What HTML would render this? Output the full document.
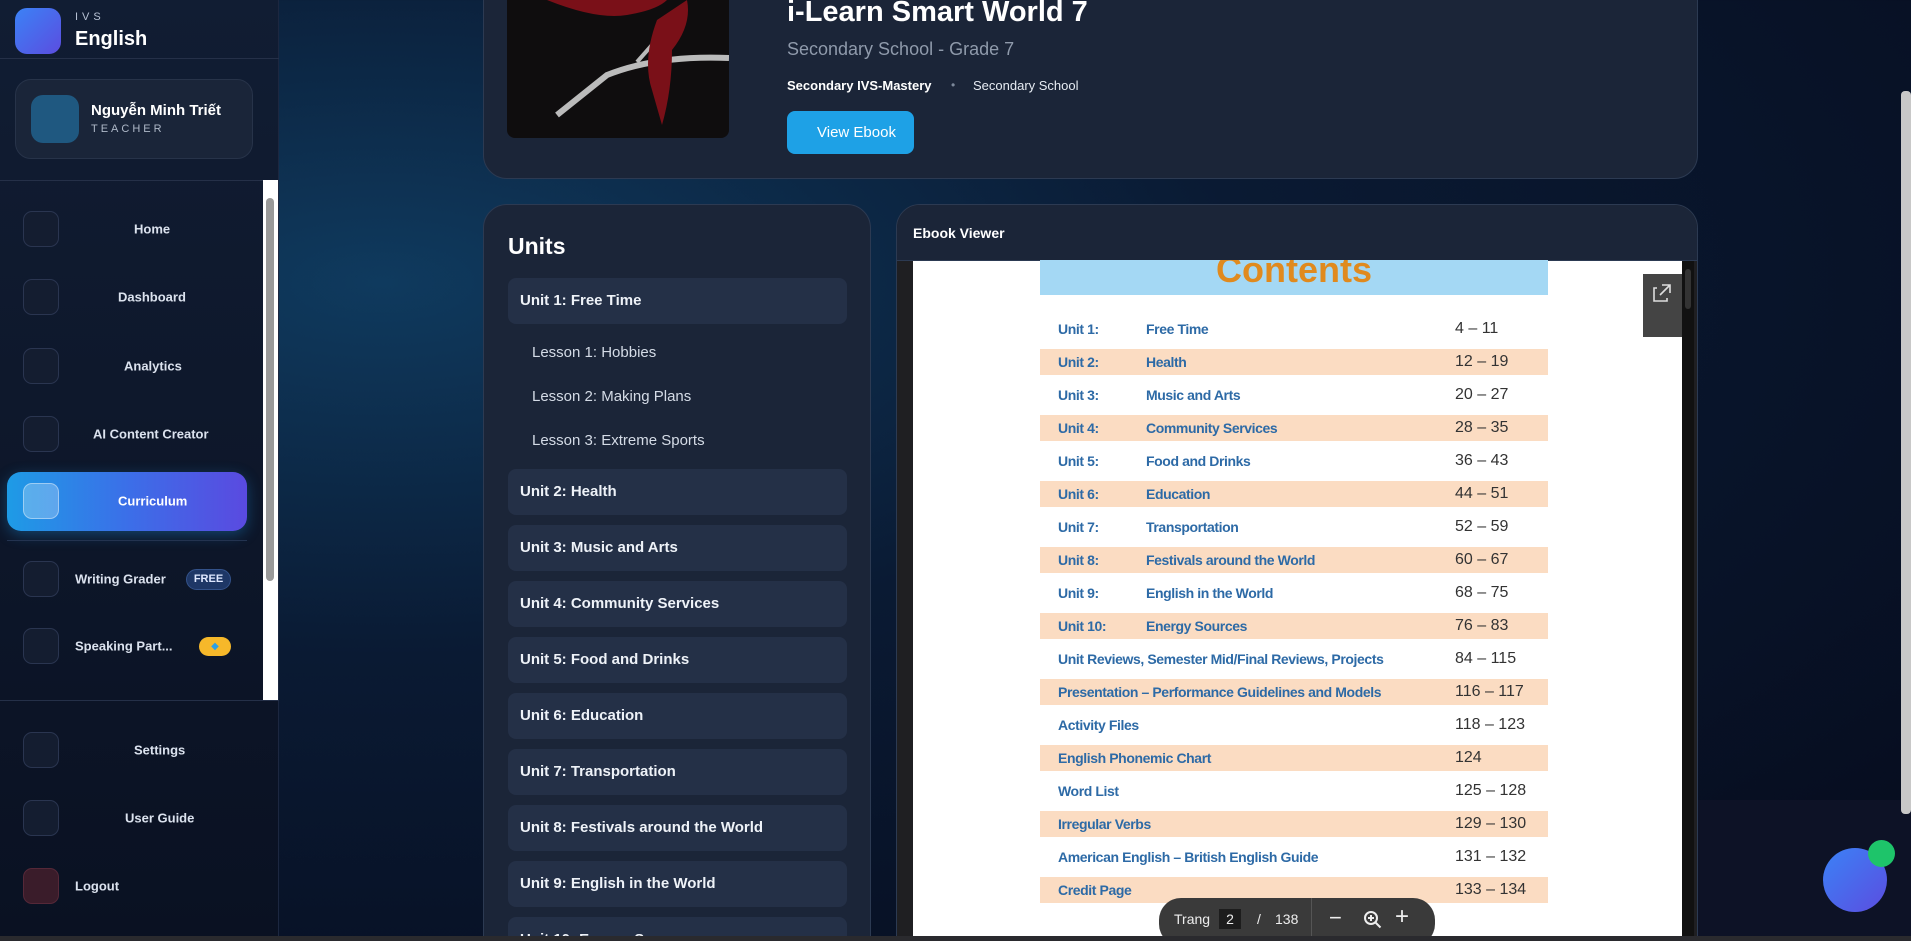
<!DOCTYPE html>
<html style="width:1911px;height:941px;overflow:hidden"><head><meta charset="utf-8"><style>
*{box-sizing:border-box;margin:0;padding:0}
body{width:1911px;height:941px;overflow:hidden;font-family:"Liberation Sans",sans-serif;background:radial-gradient(ellipse at 20% 30%,#0f3a5e 0%,#0a1a33 40%,#060b1c 100%);position:relative;color:#fff}
.abs{position:absolute}
.side{left:0;top:0;width:279px;height:941px;background:linear-gradient(#111d33,#0a1122);border-right:1px solid #1c2740}
.ico{position:absolute;left:23px;width:36px;height:36px;border-radius:9px;border:1px solid #2a3550;background:#141d30}
.nav{position:absolute;font-size:13px;font-weight:bold;color:#dbe2ee;transform:translateY(-50%)}
.card{background:#1b2538;border:1px solid #2c3a52;border-radius:24px}
.unit{position:absolute;left:24px;width:339px;height:46px;background:#243047;border-radius:8px;font-size:15px;font-weight:bold;color:#eef2f8;padding-left:12px;line-height:46px}
.les{position:absolute;left:48px;font-size:15px;color:#d4dbe6}
.row{position:absolute;left:1040px;width:508px;height:26px;font-size:14px;letter-spacing:-0.4px;color:#2d6aa6;font-weight:bold}
.row.p{background:#fbdcc2}
.row span{position:absolute;top:5px}
.row .pg{left:415px;color:#333;font-weight:normal;font-size:16px;letter-spacing:0;top:4px}
</style></head><body>
<div class="abs side">
 <div class="abs" style="left:15px;top:8px;width:46px;height:46px;border-radius:12px;background:linear-gradient(135deg,#3b82f6,#5b4de0)"></div>
 <div class="abs" style="left:75px;top:11px;font-size:11px;letter-spacing:4px;color:#b8c2d4">IVS</div>
 <div class="abs" style="left:75px;top:28px;font-size:20px;font-weight:bold">English</div>
 <div class="abs" style="left:0;top:58px;width:279px;height:1px;background:#253048"></div>
 <div class="abs" style="left:15px;top:79px;width:238px;height:80px;border-radius:16px;background:#1a2539;border:1px solid #273349"></div>
 <div class="abs" style="left:31px;top:95px;width:48px;height:48px;border-radius:12px;background:#1f5880"></div>
 <div class="abs" style="left:91px;top:102px;font-size:15px;font-weight:bold">Nguyễn Minh Triết</div>
 <div class="abs" style="left:91px;top:123px;font-size:11px;letter-spacing:3px;color:#aeb8c8">TEACHER</div>
 <div class="abs" style="left:0;top:180px;width:263px;height:1px;background:#253048"></div>
 <div class="abs" style="left:263px;top:180px;width:15px;height:520px;background:#fff"><div style="position:absolute;left:3px;top:18px;width:8px;height:383px;background:#999;border-radius:4px"></div></div>
 <div class="ico" style="top:211px"></div><div class="nav" style="left:134px;top:229px">Home</div>
 <div class="ico" style="top:279px"></div><div class="nav" style="left:118px;top:297px">Dashboard</div>
 <div class="ico" style="top:348px"></div><div class="nav" style="left:124px;top:366px">Analytics</div>
 <div class="ico" style="top:416px"></div><div class="nav" style="left:93px;top:434px">AI Content Creator</div>
 <div class="abs" style="left:7px;top:472px;width:240px;height:59px;border-radius:14px;background:linear-gradient(90deg,#1e9be6,#3b6fe8 50%,#5a4ae0);box-shadow:0 4px 14px rgba(30,150,230,.35)"></div>
 <div class="ico" style="top:483px;background:rgba(255,255,255,.25);border-color:rgba(255,255,255,.4)"></div>
 <div class="nav" style="left:118px;top:501px;color:#fff">Curriculum</div>
 <div class="abs" style="left:7px;top:540px;width:240px;height:1px;background:#233350"></div>
 <div class="ico" style="top:561px"></div><div class="nav" style="left:75px;top:579px">Writing Grader</div>
 <div class="abs" style="left:186px;top:569px;width:45px;height:21px;border-radius:11px;background:#1e3766;border:1px solid #33528a;font-size:11px;font-weight:bold;text-align:center;line-height:19px;color:#dfe8ff">FREE</div>
 <div class="ico" style="top:628px"></div><div class="nav" style="left:75px;top:646px">Speaking Part...</div>
 <div class="abs" style="left:199px;top:637px;width:32px;height:19px;border-radius:10px;background:#f6b82a;text-align:center;font-size:10px;line-height:19px;color:#2aa0e8">◆</div>
 <div class="abs" style="left:0;top:700px;width:279px;height:1px;background:#253048"></div>
 <div class="ico" style="top:732px"></div><div class="nav" style="left:134px;top:750px">Settings</div>
 <div class="ico" style="top:800px"></div><div class="nav" style="left:125px;top:818px">User Guide</div>
 <div class="ico" style="top:868px;background:#3a1c2a;border-color:#552838"></div><div class="nav" style="left:75px;top:886px">Logout</div>
</div>

<div class="abs card" style="left:483px;top:-30px;width:1215px;height:209px"></div>
<div class="abs" style="left:507px;top:0;width:222px;height:138px;border-radius:0 0 8px 8px;background:#0f0d0e;overflow:hidden">
 <svg width="222" height="138"><path d="M50 115 L100 75 Q150 55 222 58" stroke="#bbb" stroke-width="6" fill="none"/><path d="M130 62 L145 45" stroke="#bbb" stroke-width="4"/><path d="M40 0 Q90 20 120 15 Q150 10 160 0Z M150 20 Q135 60 145 90 L155 125 Q165 90 165 50 Q185 25 180 0Z" fill="#7a1018"/></svg>
</div>
<div class="abs" style="left:787px;top:-4px;font-size:29px;font-weight:bold">i-Learn Smart World 7</div>
<div class="abs" style="left:787px;top:39px;font-size:18px;color:#8f9aab">Secondary School - Grade 7</div>
<div class="abs" style="left:787px;top:78px;font-size:13px;font-weight:bold">Secondary IVS-Mastery</div>
<div class="abs" style="left:951px;top:78px;font-size:12px;color:#7c889a">•</div>
<div class="abs" style="left:973px;top:78px;font-size:13px;color:#e6ebf2">Secondary School</div>
<div class="abs" style="left:787px;top:111px;width:127px;height:43px;border-radius:8px;background:#1ea1e6;font-size:15px;line-height:43px;padding-left:30px">View Ebook</div>

<div class="abs card" style="left:483px;top:204px;width:388px;height:760px">
 <div class="abs" style="left:24px;top:28px;font-size:23px;font-weight:bold">Units</div>
 <div class="unit" style="top:73px">Unit 1: Free Time</div>
 <div class="les" style="top:139px">Lesson 1: Hobbies</div>
 <div class="les" style="top:183px">Lesson 2: Making Plans</div>
 <div class="les" style="top:227px">Lesson 3: Extreme Sports</div>
 <div class="unit" style="top:264px">Unit 2: Health</div>
 <div class="unit" style="top:320px">Unit 3: Music and Arts</div>
 <div class="unit" style="top:376px">Unit 4: Community Services</div>
 <div class="unit" style="top:432px">Unit 5: Food and Drinks</div>
 <div class="unit" style="top:488px">Unit 6: Education</div>
 <div class="unit" style="top:544px">Unit 7: Transportation</div>
 <div class="unit" style="top:600px">Unit 8: Festivals around the World</div>
 <div class="unit" style="top:656px">Unit 9: English in the World</div>
 <div class="unit" style="top:712px">Unit 10: Energy Sources</div>
</div>

<div class="abs card" style="left:896px;top:204px;width:802px;height:760px;background:#1f1f22;overflow:hidden">
 <div class="abs" style="left:0;top:0;width:802px;height:56px;background:#1b2538;border-bottom:1px solid #2c3a52"></div>
 <div class="abs" style="left:16px;top:20px;font-size:14px;font-weight:bold">Ebook Viewer</div>
 <div class="abs" style="left:16px;top:56px;width:769px;height:700px;background:#fff"></div>
 <div class="abs" style="left:785px;top:56px;width:12px;height:700px;background:#111"><div style="margin:8px 3px;width:6px;height:40px;background:#333;border-radius:3px"></div></div>
 <div class="abs" style="left:746px;top:69px;width:39px;height:63px;background:#444"><svg width="39" height="40"><path d="M14 14h-3v13h13v-3M19 11h8v8M27 11l-10 10" stroke="#ddd" stroke-width="1.6" fill="none"/></svg></div>
</div>
<div class="abs" style="left:1040px;top:260px;width:508px;height:35px;background:#a4d8f4;text-align:center;font-size:36px;line-height:20px;font-weight:bold;color:#e08a1e;overflow:hidden;transform-origin:center">Contents</div>

<div class="row" style="top:316px"><span style="left:18px">Unit 1:</span><span style="left:106px">Free Time</span><span class="pg">4 – 11</span></div>
<div class="row p" style="top:349px"><span style="left:18px">Unit 2:</span><span style="left:106px">Health</span><span class="pg">12 – 19</span></div>
<div class="row" style="top:382px"><span style="left:18px">Unit 3:</span><span style="left:106px">Music and Arts</span><span class="pg">20 – 27</span></div>
<div class="row p" style="top:415px"><span style="left:18px">Unit 4:</span><span style="left:106px">Community Services</span><span class="pg">28 – 35</span></div>
<div class="row" style="top:448px"><span style="left:18px">Unit 5:</span><span style="left:106px">Food and Drinks</span><span class="pg">36 – 43</span></div>
<div class="row p" style="top:481px"><span style="left:18px">Unit 6:</span><span style="left:106px">Education</span><span class="pg">44 – 51</span></div>
<div class="row" style="top:514px"><span style="left:18px">Unit 7:</span><span style="left:106px">Transportation</span><span class="pg">52 – 59</span></div>
<div class="row p" style="top:547px"><span style="left:18px">Unit 8:</span><span style="left:106px">Festivals around the World</span><span class="pg">60 – 67</span></div>
<div class="row" style="top:580px"><span style="left:18px">Unit 9:</span><span style="left:106px">English in the World</span><span class="pg">68 – 75</span></div>
<div class="row p" style="top:613px"><span style="left:18px">Unit 10:</span><span style="left:106px">Energy Sources</span><span class="pg">76 – 83</span></div>
<div class="row" style="top:646px"><span style="left:18px">Unit Reviews, Semester Mid/Final Reviews, Projects</span><span class="pg">84 – 115</span></div>
<div class="row p" style="top:679px"><span style="left:18px">Presentation – Performance Guidelines and Models</span><span class="pg">116 – 117</span></div>
<div class="row" style="top:712px"><span style="left:18px">Activity Files</span><span class="pg">118 – 123</span></div>
<div class="row p" style="top:745px"><span style="left:18px">English Phonemic Chart</span><span class="pg">124</span></div>
<div class="row" style="top:778px"><span style="left:18px">Word List</span><span class="pg">125 – 128</span></div>
<div class="row p" style="top:811px"><span style="left:18px">Irregular Verbs</span><span class="pg">129 – 130</span></div>
<div class="row" style="top:844px"><span style="left:18px">American English – British English Guide</span><span class="pg">131 – 132</span></div>
<div class="row p" style="top:877px"><span style="left:18px">Credit Page</span><span class="pg">133 – 134</span></div>

<div class="abs" style="left:1159px;top:898px;width:276px;height:48px;border-radius:22px;background:#3a3a3a;font-size:14px;color:#eee">
 <span class="abs" style="left:15px;top:13px">Trang</span>
 <span class="abs" style="left:60px;top:11px;width:22px;height:20px;background:#1d1d1d;text-align:center;line-height:20px">2</span>
 <span class="abs" style="left:98px;top:13px">/</span><span class="abs" style="left:116px;top:13px">138</span>
 <span class="abs" style="left:152px;top:0;width:1px;height:48px;background:#555"></span>
 <span class="abs" style="left:170px;top:7px;font-size:22px">−</span>
 <svg class="abs" style="left:204px;top:12px" width="20" height="20"><circle cx="8" cy="8" r="6" stroke="#eee" stroke-width="2" fill="none"/><path d="M12.5 12.5l5 5M5 8h6M8 5v6" stroke="#eee" stroke-width="2"/></svg>
 <span class="abs" style="left:236px;top:5px;font-size:24px">+</span>
</div>

<div class="abs" style="left:1698px;top:800px;width:213px;height:136px;background:#0d1226"></div>
<div class="abs" style="left:1901px;top:91px;width:10px;height:723px;background:#c8c8c8;border-radius:4px"></div>
<div class="abs" style="left:1823px;top:848px;width:64px;height:64px;border-radius:50%;background:linear-gradient(135deg,#3b82f6,#5b4de0)"></div>
<div class="abs" style="left:1868px;top:840px;width:27px;height:27px;border-radius:50%;background:#1ec46a"></div>
<div class="abs" style="left:0;top:936px;width:1911px;height:5px;background:#2a2a2e"></div>
</body></html>
